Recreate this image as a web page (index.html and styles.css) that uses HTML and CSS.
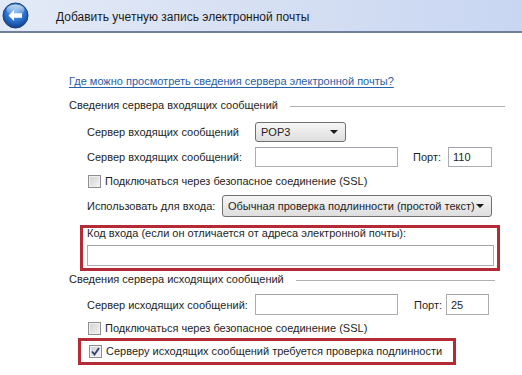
FILE: index.html
```html
<!DOCTYPE html>
<html lang="ru">
<head>
<meta charset="utf-8">
<link rel="stylesheet" href="styles.css">
</head>
<body>
<div class="titlebar">
  <span class="back">
    <svg width="27" height="27" viewBox="0 0 27 27">
      <defs>
        <radialGradient id="g" cx="50%" cy="35%" r="65%">
          <stop offset="0" stop-color="#6fb1ee"/>
          <stop offset="0.6" stop-color="#2a6fc9"/>
          <stop offset="1" stop-color="#123f8a"/>
        </radialGradient>
        <linearGradient id="s" x1="0" y1="0" x2="0" y2="1">
          <stop offset="0" stop-color="#ffffff" stop-opacity="0.7"/>
          <stop offset="1" stop-color="#ffffff" stop-opacity="0"/>
        </linearGradient>
      </defs>
      <circle cx="13.5" cy="13.5" r="12.5" fill="url(#g)" stroke="#1b3f7a" stroke-width="1"/>
      <ellipse cx="13.5" cy="8" rx="9" ry="5.5" fill="url(#s)"/>
      <path d="M6.5 13.5 L12 8 L12 11.3 L20 11.3 L20 15.7 L12 15.7 L12 19 Z" fill="#ffffff"/>
    </svg>
  </span>
  <span class="title">Добавить учетную запись электронной почты</span>
</div>
<div class="content">
  <div class="linkrow"><a class="link">Где можно просмотреть сведения сервера электронной почты?</a></div>

  <div class="group"><span>Сведения сервера входящих сообщений</span><i class="rule"></i></div>

  <div class="row r1"><span class="label">Сервер входящих сообщений</span><span class="combo small">POP3<b class="arrow"></b></span></div>
  <div class="row r2"><span class="label">Сервер входящих сообщений:</span><span class="input server"></span><span class="port">Порт:</span><span class="input portin">110</span></div>
  <div class="row chk"><span class="box"></span><span>Подключаться через безопасное соединение (SSL)</span></div>
  <div class="row r4"><span class="label short">Использовать для входа:</span><span class="combo wide">Обычная проверка подлинности (простой текст)<b class="arrow"></b></span></div>

  <div class="mark mark1">
    <div class="mlabel">Код входа (если он отличается от адреса электронной почты):</div>
    <span class="input login"></span>
  </div>

  <div class="group g2"><span>Сведения сервера исходящих сообщений</span><i class="rule r2line"></i></div>

  <div class="row r5"><span class="label">Сервер исходящих сообщений:</span><span class="input server"></span><span class="port p2">Порт:</span><span class="input portin p2in">25</span></div>
  <div class="row chk c2"><span class="box"></span><span>Подключаться через безопасное соединение (SSL)</span></div>
  <div class="mark mark2">
    <div class="row chk c3"><span class="box checked">
      <svg width="9" height="9" viewBox="0 0 9 9"><path d="M1 4.5 L3.5 7.5 L8 1" fill="none" stroke="#2b3f74" stroke-width="1.8"/></svg>
    </span><span>Серверу исходящих сообщений требуется проверка подлинности</span></div>
  </div>
</div>
</body>
</html>
```
FILE: styles.css
```css
html, body { margin: 0; padding: 0; background: #ffffff; }
body {
  font-family: "Liberation Sans", Arial, sans-serif;
  font-size: 11px;
  color: #1e1e1e;
  width: 522px;
  height: 375px;
  overflow: hidden;
  white-space: nowrap;
}
.titlebar {
  height: 31px;
  border-bottom: 2px solid #6f7f99;
  background: linear-gradient(90deg, #e3eaf7 0%, #d6e0f3 50%, #c9d6f2 100%);
  display: flex;
  align-items: center;
}
.back { width: 27px; height: 27px; margin-left: 2px; display: flex; }
.title { margin-left: 27px; font-size: 12px; color: #1b1b1b; margin-top: 2px; }

.content { padding-left: 69px; }
.linkrow { margin-top: 40px; height: 16px; line-height: 16px; }
.link { color: #2660a6; text-decoration: underline; text-underline-offset: 2px; }

.group { display: flex; align-items: center; height: 16px; line-height: 16px; margin-top: 8px; width: 436px; }
.group .rule { flex: 1; height: 1px; background: #b0b0b0; margin-left: 12px; margin-top: 2px; }
.g2 { margin-top: 0; width: 426px; }

.row { display: flex; align-items: center; padding-left: 18px; }
.label { width: 168px; flex: none; }
.label.short { width: 135px; }
.r1 { margin-top: 9px; height: 20px; }
.r2 { margin-top: 5px; height: 20px; }
.chk { margin-top: 6px; height: 16px; }
.r4 { margin-top: 6px; height: 22px; }
.r5 { margin-top: 7px; height: 21px; }
.c2 { margin-top: 5px; }

.combo {
  box-sizing: border-box;
  height: 100%;
  display: flex;
  align-items: center;
  padding-left: 5px;
  border: 1px solid #707070;
  border-radius: 3px;
  background: linear-gradient(#f6f6f6, #dedede);
  position: relative;
}
.combo.small { width: 91px; }
.combo.wide { width: 270px; }
.arrow {
  position: absolute;
  right: 7px;
  top: 50%;
  margin-top: -2px;
  border-left: 4px solid transparent;
  border-right: 4px solid transparent;
  border-top: 4px solid #1a1a1a;
}
.input {
  box-sizing: border-box;
  height: 100%;
  border: 1px solid #abadb3;
  border-top-color: #a0a4ab;
  background: #fff;
  display: flex;
  align-items: center;
  padding-left: 4px;
}
.input.server { width: 143px; }
.port { margin-left: 15px; width: 35px; }
.input.portin { width: 44px; }
.p2 { margin-left: 16px; width: 32px; }
.input.p2in { width: 43px; }

.box {
  box-sizing: border-box;
  width: 13px; height: 13px;
  border: 1px solid #8f8f8f;
  background: linear-gradient(135deg, #d0d0d0, #f4f4f4);
  box-shadow: inset 0 0 0 1px #f0f0f0;
  margin-right: 4px;
  margin-left: 1px;
  display: flex;
  align-items: center;
  justify-content: center;
}

.mark { border: 3px solid #b52b35; box-sizing: border-box; }
.mark1 { margin-left: 11px; margin-top: 8px; width: 420px; height: 46px; }
.mlabel { height: 14px; line-height: 14px; margin-top: -2px; padding-left: 4px; }
.input.login { display: block; height: 21px; width: 407px; margin-left: 4px; margin-top: 5px; }
.mark2 { margin-left: 9px; margin-top: 2px; width: 378px; height: 27px; }
.c3 { margin-top: 2px; padding-left: 7px; }
```
